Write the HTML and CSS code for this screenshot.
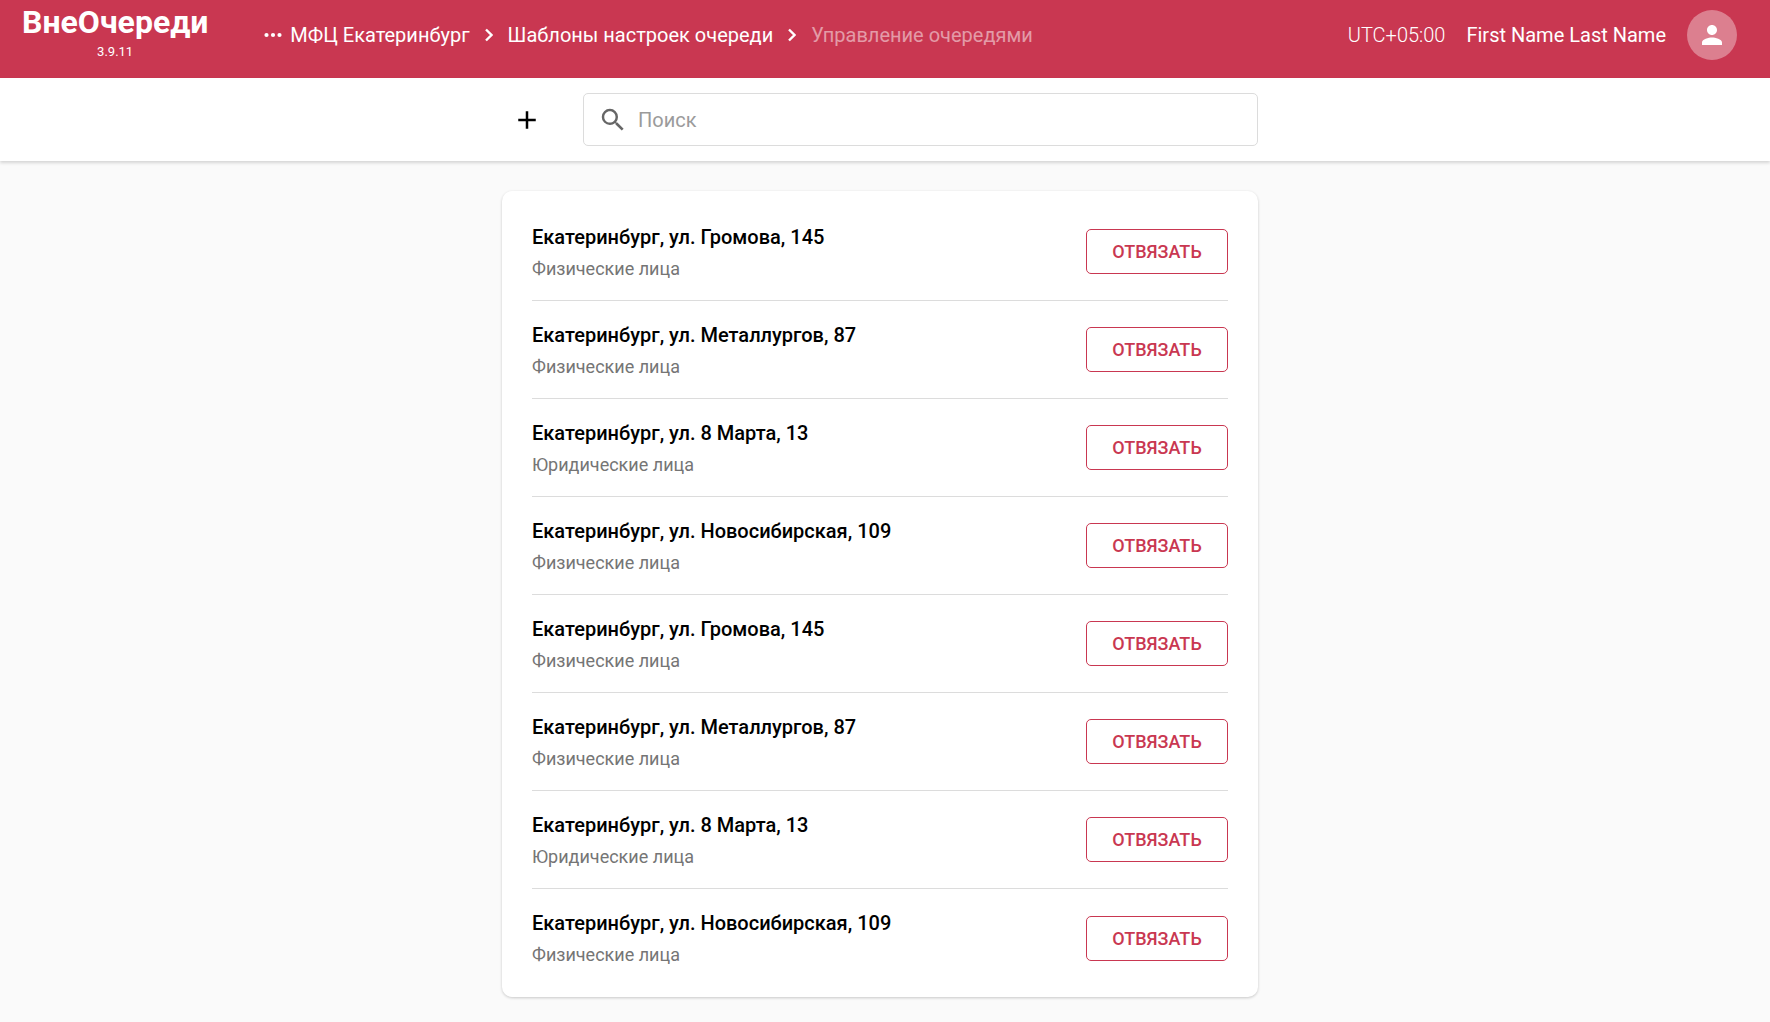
FILE: index.html
```
<!DOCTYPE html>
<html lang="ru">
<head>
    <meta charset="UTF-8">
    <meta name="viewport" content="width=device-width, initial-scale=1.0">
    <title>ВнеОчереди</title>
    <link rel="stylesheet" href="styles.css">
</head>
<body>
    <header class="header">
        <div class="logo">
            <a href="#" class="logo-name">ВнеОчереди</a>
            <span class="logo-version">3.9.11</span>
        </div>
        <nav class="breadcrumbs">
            <a href="#" class="breadcrumb">
                <svg class="breadcrumb-dots" viewBox="0 0 18 6">
                    <circle cx="2.5" cy="3" r="2.1"/>
                    <circle cx="9" cy="3" r="2.1"/>
                    <circle cx="15.5" cy="3" r="2.1"/>
                </svg>
                МФЦ Екатеринбург
            </a>
            <svg class="breadcrumb-arrow" viewBox="0 0 8 14">
                <path d="M1 1.5L6.5 7 1 12.5"/>
            </svg>
            <a href="#" class="breadcrumb">Шаблоны настроек очереди</a>
            <svg class="breadcrumb-arrow" viewBox="0 0 8 14">
                <path d="M1 1.5L6.5 7 1 12.5"/>
            </svg>
            <span class="breadcrumb current">Управление очередями</span>
        </nav>
        <div class="user">
            <span class="user-timezone">UTC+05:00</span>
            <span class="user-name">First Name Last Name</span>
            <button class="user-avatar" type="button" aria-label="Профиль">
                <svg viewBox="0 0 24 24">
                    <path d="M12 12c2.21 0 4-1.79 4-4s-1.79-4-4-4-4 1.79-4 4 1.79 4 4 4zm0 2c-2.67 0-8 1.34-8 4v2h16v-2c0-2.66-5.33-4-8-4z"/>
                </svg>
            </button>
        </div>
    </header>

    <div class="toolbar">
        <div class="toolbar-inner">
            <button class="add-button" type="button" aria-label="Добавить">
                <svg viewBox="0 0 24 24">
                    <path d="M19 13h-6v6h-2v-6H5v-2h6V5h2v6h6v2z"/>
                </svg>
            </button>
            <label class="search">
                <svg class="search-icon" viewBox="0 0 24 24">
                    <path d="M15.5 14h-.79l-.28-.27A6.471 6.471 0 0 0 16 9.5 6.5 6.5 0 1 0 9.5 16c1.61 0 3.09-.59 4.23-1.57l.27.28v.79l5 4.99L20.49 19l-4.99-5zm-6 0C7.01 14 5 11.99 5 9.5S7.01 5 9.5 5 14 7.01 14 9.5 11.99 14 9.5 14z"/>
                </svg>
                <input class="search-input" type="text" placeholder="Поиск" aria-label="Поиск">
            </label>
        </div>
    </div>

    <main class="content">
        <ul class="queue-list">
            <li class="queue-item">
                <div class="queue-info">
                    <div class="queue-address">Екатеринбург, ул. Громова, 145</div>
                    <div class="queue-type">Физические лица</div>
                </div>
                <button class="unlink-button" type="button">ОТВЯЗАТЬ</button>
            </li>
            <li class="queue-item">
                <div class="queue-info">
                    <div class="queue-address">Екатеринбург, ул. Металлургов, 87</div>
                    <div class="queue-type">Физические лица</div>
                </div>
                <button class="unlink-button" type="button">ОТВЯЗАТЬ</button>
            </li>
            <li class="queue-item">
                <div class="queue-info">
                    <div class="queue-address">Екатеринбург, ул. 8 Марта, 13</div>
                    <div class="queue-type">Юридические лица</div>
                </div>
                <button class="unlink-button" type="button">ОТВЯЗАТЬ</button>
            </li>
            <li class="queue-item">
                <div class="queue-info">
                    <div class="queue-address">Екатеринбург, ул. Новосибирская, 109</div>
                    <div class="queue-type">Физические лица</div>
                </div>
                <button class="unlink-button" type="button">ОТВЯЗАТЬ</button>
            </li>
            <li class="queue-item">
                <div class="queue-info">
                    <div class="queue-address">Екатеринбург, ул. Громова, 145</div>
                    <div class="queue-type">Физические лица</div>
                </div>
                <button class="unlink-button" type="button">ОТВЯЗАТЬ</button>
            </li>
            <li class="queue-item">
                <div class="queue-info">
                    <div class="queue-address">Екатеринбург, ул. Металлургов, 87</div>
                    <div class="queue-type">Физические лица</div>
                </div>
                <button class="unlink-button" type="button">ОТВЯЗАТЬ</button>
            </li>
            <li class="queue-item">
                <div class="queue-info">
                    <div class="queue-address">Екатеринбург, ул. 8 Марта, 13</div>
                    <div class="queue-type">Юридические лица</div>
                </div>
                <button class="unlink-button" type="button">ОТВЯЗАТЬ</button>
            </li>
            <li class="queue-item">
                <div class="queue-info">
                    <div class="queue-address">Екатеринбург, ул. Новосибирская, 109</div>
                    <div class="queue-type">Физические лица</div>
                </div>
                <button class="unlink-button" type="button">ОТВЯЗАТЬ</button>
            </li>
        </ul>
    </main>
</body>
</html>
```
FILE: styles.css
```
* {
    box-sizing: border-box;
    font-family: Roboto, sans-serif;
}

body {
    margin: 0;
    background-color: #fafafa;
    color: #000;
}

.header {
    display: flex;
    align-items: flex-start;
    padding: 4px 33px 0 22px;
    height: 78px;
    background-color: #c93751;
    color: #fff;
}

.logo {
    display: flex;
    flex-direction: column;
    align-items: center;
    margin-right: 56px;
}

.logo-name {
    font-size: 32px;
    line-height: 36px;
    font-weight: 700;
    color: #fff;
    text-decoration: none;
}

.logo-version {
    font-size: 13px;
    line-height: 24px;
}

.breadcrumbs {
    display: flex;
    align-items: center;
    gap: 15px;
    height: 62px;
}

.breadcrumb {
    display: flex;
    align-items: center;
    gap: 8px;
    font-size: 20px;
    color: #fff;
    text-decoration: none;
}

.breadcrumb.current {
    color: rgba(255, 255, 255, 0.5);
}

.breadcrumb-dots {
    width: 18px;
    height: 6px;
    fill: #fff;
}

.breadcrumb-arrow {
    width: 8px;
    height: 14px;
    fill: none;
    stroke: #fff;
    stroke-width: 2.4;
}

.user {
    display: flex;
    align-items: center;
    gap: 21px;
    height: 62px;
    margin-left: auto;
    font-size: 20px;
}

.user-timezone {
    font-weight: 300;
}

.user-avatar {
    display: flex;
    align-items: center;
    justify-content: center;
    width: 50px;
    height: 50px;
    padding: 0;
    border: none;
    border-radius: 50%;
    background-color: rgba(255, 255, 255, 0.36);
    cursor: pointer;
}

.user-avatar svg {
    width: 30px;
    height: 30px;
    fill: #fff;
}

.toolbar {
    padding: 15px 10px 15px 0;
    background-color: #fff;
    box-shadow: 0 2px 3px rgba(0, 0, 0, 0.15);
}

.toolbar-inner {
    display: flex;
    align-items: center;
    max-width: 756px;
    margin: 0 auto;
}

.add-button {
    display: flex;
    align-items: center;
    justify-content: center;
    width: 50px;
    height: 50px;
    margin-right: 31px;
    padding: 0;
    border: none;
    background: none;
    cursor: pointer;
}

.add-button svg {
    width: 30px;
    height: 30px;
}

.search {
    display: flex;
    flex: 1;
    align-items: center;
    gap: 10px;
    height: 53px;
    padding: 0 14px;
    border: 1px solid #dcdcdc;
    border-radius: 5px;
}

.search-icon {
    width: 30px;
    height: 30px;
    fill: #666;
}

.search-input {
    flex: 1;
    padding: 0;
    border: none;
    outline: none;
    background: none;
    font-size: 20px;
}

.search-input::placeholder {
    color: #9b9b9b;
}

.content {
    padding: 30px 10px 24px 0;
}

.queue-list {
    max-width: 756px;
    margin: 0 auto;
    padding: 12px 30px 10px;
    list-style: none;
    background-color: #fff;
    border-radius: 10px;
    box-shadow: 0 1px 3px rgba(0, 0, 0, 0.2);
}

.queue-item {
    display: flex;
    align-items: center;
    justify-content: space-between;
    height: 98px;
    border-bottom: 1px solid #dcdcdc;
}

.queue-item:last-child {
    border-bottom: none;
}

.queue-info {
    padding-top: 2px;
}

.queue-address {
    font-size: 20px;
    line-height: 32px;
    font-weight: 500;
}

.queue-type {
    font-size: 18px;
    line-height: 32px;
    color: #757575;
}

.unlink-button {
    width: 142px;
    height: 45px;
    border: 1px solid #c93751;
    border-radius: 5px;
    background: none;
    font-size: 18px;
    font-weight: 500;
    color: #c93751;
    cursor: pointer;
}
```
